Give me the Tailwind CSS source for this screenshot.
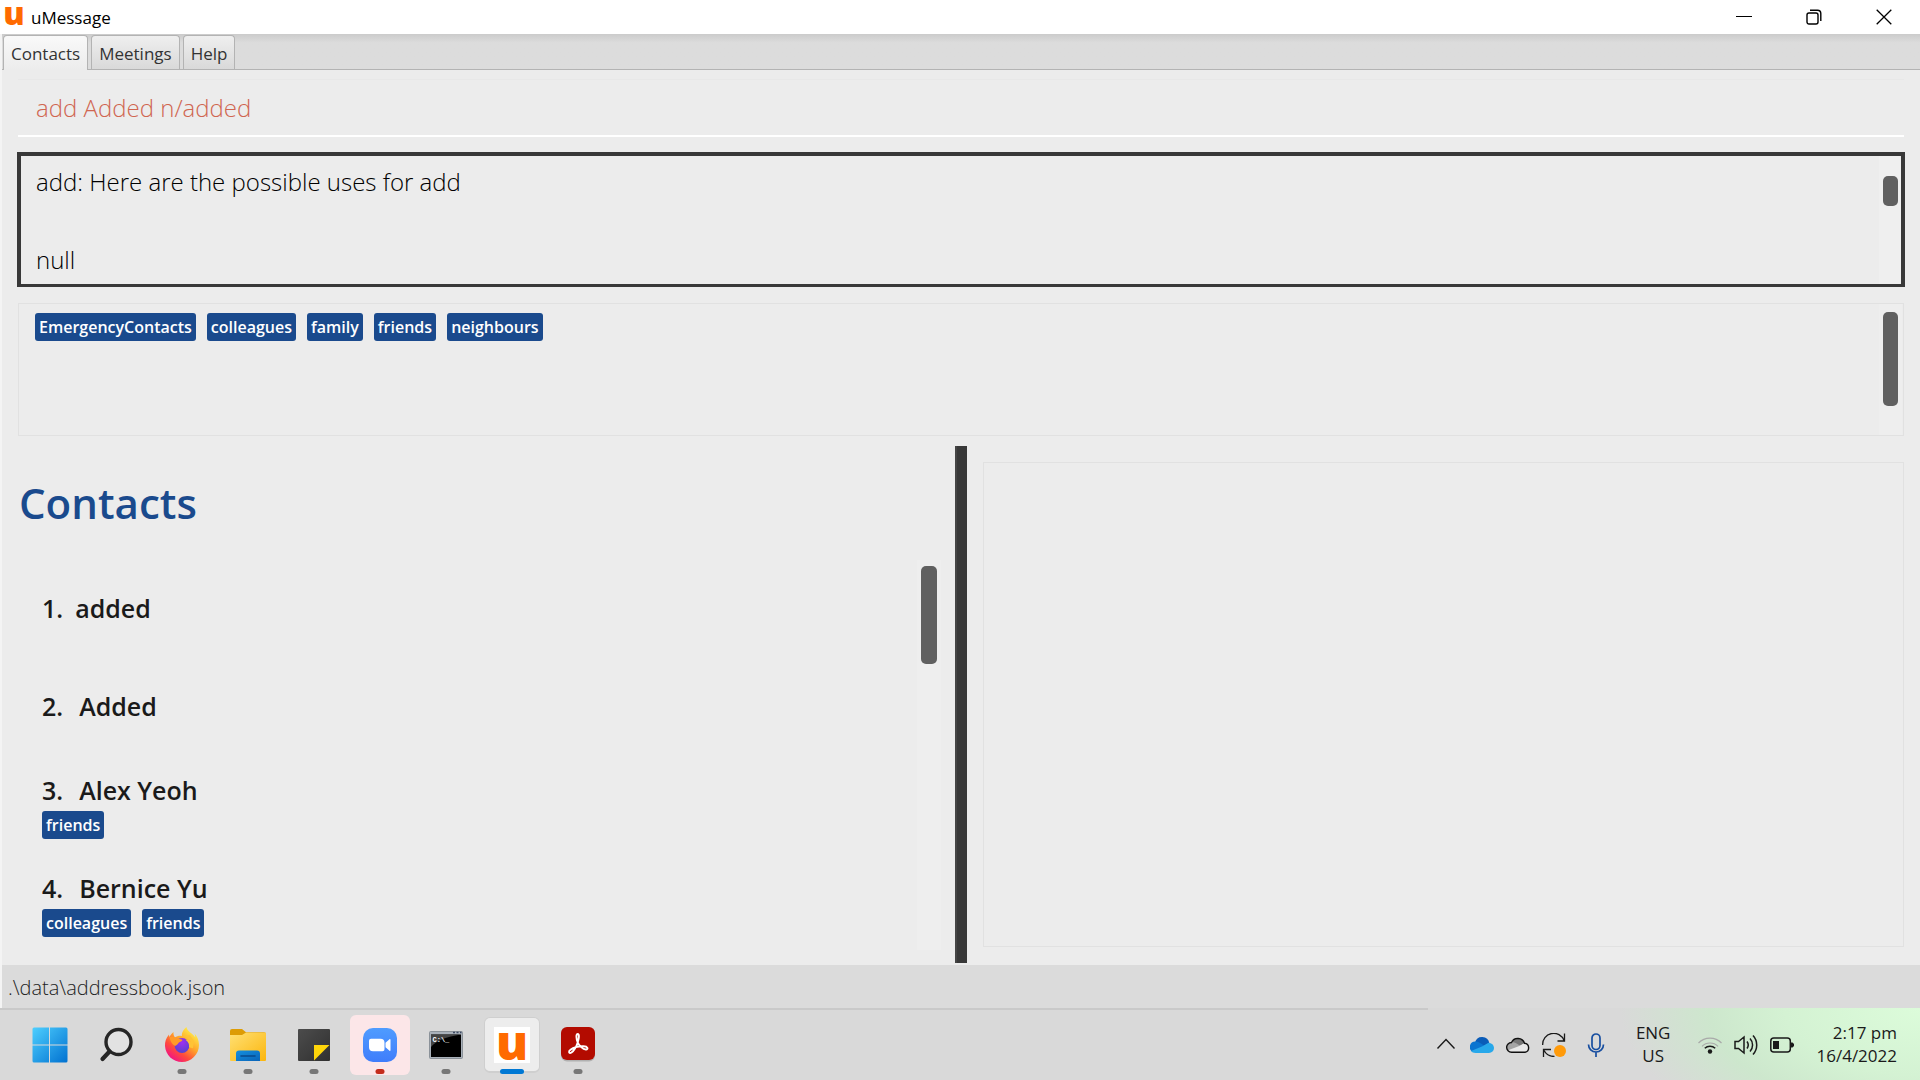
<!DOCTYPE html>
<html lang="en">
<head>
<meta charset="utf-8">
<meta name="viewport" content="width=device-width, initial-scale=1">
<title>uMessage</title>
<script src="https://cdn.jsdelivr.net/npm/@tailwindcss/browser@4"></script>
</head>
<body class="flex min-h-screen flex-col bg-[#ececec] font-['Open_Sans','Noto_Sans',sans-serif] text-[17px] text-black">

<!-- Title bar -->
<header class="flex h-[34px] items-center justify-between bg-white pr-7 pl-[5px]">
  <div class="flex items-center gap-2">
    <svg class="h-[18px] w-[18px] overflow-visible" viewBox="0 0 18 18" aria-hidden="true"><text x="9" y="17" text-anchor="middle" font-size="32" font-weight="800" fill="#ff6a00">u</text></svg>
    <h1 class="pt-[2px] leading-8">uMessage</h1>
  </div>
  <div class="flex items-center gap-[54px]">
    <button aria-label="Minimize"><svg class="h-4 w-4" viewBox="0 0 16 16"><path d="M0 7.500h16" stroke="#000"/></svg></button>
    <button aria-label="Restore"><svg class="h-4 w-4" viewBox="0 0 16 16" fill="none" stroke="#000" stroke-width="1.400"><rect x="1" y="4" width="11" height="11" rx="2"/><path d="M4 1.200h7.500a3.300 3.300 0 0 1 3.300 3.300V12"/></svg></button>
    <button aria-label="Close"><svg class="h-4 w-4" viewBox="0 0 16 16"><path d="M.7.7l14.600 14.600M15.300.7L.7 15.300" stroke="#000" stroke-width="1.300"/></svg></button>
  </div>
</header>

<div class="flex flex-1 flex-col border-l-2 border-[#f4f4f4]">
  <!-- Tabs -->
  <nav class="flex h-9 items-end gap-[3px] border-b border-[#b3b3b3] bg-linear-to-b from-[#cbcbcb] to-[#dcdcdc] to-25% pl-px text-[#333]" role="tablist">
    <button role="tab" aria-selected="true" class="-mb-px h-[35px] rounded-t-[4px] border border-b-0 border-[#b3b3b3] bg-linear-to-b from-[#f9f9f9] to-[#ececec] px-[7px] pt-px leading-[34px]">Contacts</button>
    <button role="tab" aria-selected="false" class="h-[34px] rounded-t-[4px] border border-b-0 border-[#b3b3b3] bg-linear-to-b from-[#efefef] to-[#d9d9d9] px-[7px] pt-px leading-[34px]">Meetings</button>
    <button role="tab" aria-selected="false" class="h-[34px] rounded-t-[4px] border border-b-0 border-[#b3b3b3] bg-linear-to-b from-[#efefef] to-[#d9d9d9] px-[7px] pt-px leading-[34px]">Help</button>
  </nav>

  <!-- Command box, result display and tag list -->
  <div class="flex flex-col px-[15px] pt-[9px]">
    <input type="text" aria-label="Command" value="add Added n/added" class="mx-px h-[58px] border-t border-b-2 border-t-[#e8e8e8] border-b-white px-[18px] text-2xl font-light text-[#d06651] outline-none">

    <div class="mt-[15px] flex h-[135px] border-4 border-b-3 border-[#383838]">
      <textarea readonly aria-label="Result" class="flex-1 resize-none overflow-hidden px-[15px] pt-[6px] text-2xl leading-[39px] font-light outline-none">add: Here are the possible uses for add

null</textarea>
      <div class="w-[22px] rounded-r-[3px] bg-[#efefef] pt-5 pr-[3px] pl-1"><div class="h-[30px] rounded-[5px] bg-[#606060]"></div></div>
    </div>

    <section aria-label="Tags" class="mx-px mt-4 flex h-[133px] border border-[#e1e1e1]">
      <ul class="flex flex-1 items-start gap-[11px] px-4 pt-[9px] text-base leading-7 font-semibold text-white">
        <li class="rounded-[3px] bg-[#1a4a8d] px-1">EmergencyContacts</li>
        <li class="rounded-[3px] bg-[#1a4a8d] px-1">colleagues</li>
        <li class="rounded-[3px] bg-[#1a4a8d] px-1">family</li>
        <li class="rounded-[3px] bg-[#1a4a8d] px-1">friends</li>
        <li class="rounded-[3px] bg-[#1a4a8d] px-1">neighbours</li>
      </ul>
      <div class="mr-px w-[23px] bg-[#eeeeee] px-1 pt-2"><div class="h-[94px] rounded-[5px] bg-[#606060]"></div></div>
    </section>
  </div>

  <!-- Contact list and details -->
  <main class="mt-[10px] mb-[2px] flex flex-1 pl-[2px]">
    <section class="flex flex-1 flex-col pt-[26px] pr-[14px] pb-[13px] pl-[15px]">
      <h2 class="pt-[2px] text-[42px] leading-[58px] font-semibold text-[#1a4a8d]">Contacts</h2>
      <div class="mt-7 flex flex-1">
        <ol class="flex-1 px-[23px] pt-[30px] text-[#1a1a1a]">
          <li class="h-[98px]"><h3 class="flex gap-3 text-[25px] leading-9 font-semibold"><span>1.</span><span>added</span></h3></li>
          <li class="h-[84px]"><h3 class="flex gap-4 text-[25px] leading-9 font-semibold"><span>2.</span><span>Added</span></h3></li>
          <li class="h-[98px]">
            <h3 class="flex gap-4 text-[25px] leading-9 font-semibold"><span>3.</span><span>Alex Yeoh</span></h3>
            <div class="mt-[3px] flex gap-[11px] text-base leading-7 font-semibold text-white"><span class="rounded-[3px] bg-[#1a4a8d] px-1">friends</span></div>
          </li>
          <li>
            <h3 class="flex gap-4 text-[25px] leading-9 font-semibold"><span>4.</span><span>Bernice Yu</span></h3>
            <div class="mt-[3px] flex gap-[11px] text-base leading-7 font-semibold text-white"><span class="rounded-[3px] bg-[#1a4a8d] px-1">colleagues</span><span class="rounded-[3px] bg-[#1a4a8d] px-1">friends</span></div>
          </li>
        </ol>
        <div class="w-6 bg-[#eeeeee] px-1 pt-[6px]"><div class="h-[98px] rounded-[5px] bg-[#606060]"></div></div>
      </div>
    </section>
    <div role="separator" class="w-3 border-l-2 border-[#454545] bg-[#383838]"></div>
    <section aria-label="Details" class="flex flex-1 pt-4 pr-4 pb-4 pl-4"><div class="flex-1 border border-[#e1e1e1]"></div></section>
  </main>

  <div class="bg-[#dbdbdb] pt-[2px] pl-[6px] text-xl leading-[41px] font-light text-[#222]">.\data\addressbook.json</div>
</div>

<!-- Taskbar -->
<footer class="relative flex h-[72px] items-center justify-between bg-[#d9d9d9] bg-[radial-gradient(ellipse_300px_150px_at_100%_0%,#dcfcda_0%,#d4f2d3_45%,#cde7cd_70%,#d9d9d9_100%)] pt-[7px] pr-[23px] pb-[5px] pl-5">
  <div class="absolute top-0 left-0 h-[2px] w-[1428px] max-w-3/4 bg-[#c9c9c9]"></div>
  <nav class="flex gap-[6px]" aria-label="Taskbar">
    <button aria-label="Start" class="relative flex size-15 items-center justify-center">
      <svg class="size-9" viewBox="0 0 36 36"><defs><linearGradient id="win" gradientUnits="userSpaceOnUse" x1="0" y1="0" x2="36" y2="36"><stop offset="0" stop-color="#4fd0ff"/><stop offset="1" stop-color="#0070d0"/></linearGradient></defs><path d="M2 .5h15v17H.5V2A1.500 1.500 0 0 1 2 .5zM18 .5h16A1.500 1.500 0 0 1 35.500 2v15.500H18zM.5 18.500H17v17H2A1.500 1.500 0 0 1 .5 34zM18 18.500h17.500V34a1.500 1.500 0 0 1-1.500 1.500H18z" fill="url(#win)"/></svg>
    </button>
    <button aria-label="Search" class="relative flex size-15 items-center justify-center">
      <svg class="size-9" viewBox="0 0 36 36" fill="none" stroke="#262626"><circle cx="20.500" cy="15" r="12.500" fill="#e2e2e2" stroke-width="3.400"/><path d="M11.500 24.500L4.500 32" stroke-width="4.200" stroke-linecap="round"/></svg>
    </button>
    <button aria-label="Firefox" class="relative flex size-15 items-center justify-center">
      <svg class="size-9" viewBox="0 0 36 36"><defs><linearGradient id="fx" x1=".85" y1=".1" x2=".2" y2=".95"><stop offset="0" stop-color="#fff14a"/><stop offset=".4" stop-color="#ffa52a"/><stop offset=".7" stop-color="#ff4a3c"/><stop offset="1" stop-color="#f0108a"/></linearGradient><radialGradient id="fg" cx=".5" cy=".3" r=".8"><stop offset="0" stop-color="#a030f0"/><stop offset="1" stop-color="#4b45c8"/></radialGradient></defs><path d="M22.500 0C18.500 3 17.500 7 18 9c-3-.5-5 .3-7 1.500C9.800 9 9.300 7 9.500 5 7.500 6.500 6.300 8.500 5.500 10c-.3-.8-.5-1.800-.5-2.500C2 11 .8 15 1 19c.5 9 8 16 17 16s17-7.500 17-17c0-5-2-9-4.500-11.500.5 1.500.8 3 .7 4C29 6 23 5 22.500 0z" fill="url(#fx)"/><circle cx="18" cy="18.500" r="7.500" fill="url(#fg)"/><path d="M5.500 10c3.500-.5 7 0 8.500 2 2 0 4 .2 4.500 1-.5 1.800-3.500 2-4 3-.5 1.200-1.500 2-3.500 3C7.500 17 6 13.500 5.500 10z" fill="#ff9a28"/><path d="M18 9c5 0 8 3 9 6.500-2-2.500-4-3-5.500-2.800 3 2 4 5 3.500 7.500l4 1 1-7-4-6z" fill="#ffc334"/></svg>
      <span class="absolute bottom-px left-1/2 h-[5px] w-[9px] -translate-x-1/2 rounded-full bg-[#777]"></span>
    </button>
    <button aria-label="File Explorer" class="relative flex size-15 items-center justify-center">
      <svg class="size-9" viewBox="0 0 36 36"><defs><linearGradient id="fo" x1="0" y1="0" x2="1" y2="1"><stop offset="0" stop-color="#ffe074"/><stop offset="1" stop-color="#fbb60d"/></linearGradient><linearGradient id="fb" x1="0" y1="0" x2="1" y2="1"><stop offset="0" stop-color="#1490df"/><stop offset="1" stop-color="#0a64b8"/></linearGradient></defs><path d="M0 4a2 2 0 0 1 2-2h10l4 3.200h18a2 2 0 0 1 2 2V20H0z" fill="#dd9c05"/><path d="M0 8h12l4-2.500h19A1 1 0 0 1 36 6.500V33a1 1 0 0 1-1 1H1a1 1 0 0 1-1-1z" fill="url(#fo)"/><path d="M6 34v-7.500a3 3 0 0 1 3-3h18a3 3 0 0 1 3 3V34z" fill="url(#fb)"/><path d="M11 29h14" stroke="#084a8c" stroke-width="1.600" stroke-linecap="round"/></svg>
      <span class="absolute bottom-px left-1/2 h-[5px] w-[9px] -translate-x-1/2 rounded-full bg-[#777]"></span>
    </button>
    <button aria-label="Sticky Notes" class="relative flex size-15 items-center justify-center">
      <svg class="size-9" viewBox="0 0 36 36"><defs><linearGradient id="sn" x1="0" y1="0" x2="1" y2="1"><stop offset="0" stop-color="#4c4c4c"/><stop offset="1" stop-color="#303030"/></linearGradient></defs><rect x="2" y="2" width="32" height="32" rx="1" fill="url(#sn)"/><path d="M18 18h15.500L18 33.500z" fill="#ffd60a"/></svg>
      <span class="absolute bottom-px left-1/2 h-[5px] w-[9px] -translate-x-1/2 rounded-full bg-[#777]"></span>
    </button>
    <button aria-label="Zoom" class="relative flex size-15 items-center justify-center rounded-md bg-[#fce6e8]">
      <svg class="size-9" viewBox="0 0 36 36"><defs><linearGradient id="zm" x1="0" y1="0" x2="0" y2="1"><stop offset="0" stop-color="#4f9cff"/><stop offset="1" stop-color="#3f7dfb"/></linearGradient></defs><rect x="1" y="1" width="34" height="34" rx="10" fill="url(#zm)"/><path d="M7 13.800a2 2 0 0 1 2-2h9.500a4 4 0 0 1 4 4v6.400a2 2 0 0 1-2 2H11a4 4 0 0 1-4-4zM23.500 15.800l4-3.500c.5-.4 1-.1 1 .5v10.400c0 .6-.5.900-1 .5l-4-3.500z" fill="#fff"/></svg>
      <span class="absolute bottom-px left-1/2 h-[5px] w-[9px] -translate-x-1/2 rounded-full bg-[#c42b1c]"></span>
    </button>
    <button aria-label="Command Prompt" class="relative flex size-15 items-center justify-center">
      <svg class="size-9" viewBox="0 0 36 36"><rect x="1.500" y="4.500" width="33" height="27" rx="1" fill="#a9b1ba" stroke="#8b9299"/><path d="M25 5.500h2M28.500 5.500h2M32 5.500h1.500" stroke="#3d4a63" stroke-width="1.500"/><rect x="3" y="7.500" width="30" height="22.500" fill="#000"/><path d="M3 7.500h30C18 10 9 13 3 20z" fill="#444"/><text x="4.500" y="14.500" font-size="7" font-weight="700" fill="#fff" font-family="Liberation Mono, monospace">C:\_</text></svg>
      <span class="absolute bottom-px left-1/2 h-[5px] w-[9px] -translate-x-1/2 rounded-full bg-[#777]"></span>
    </button>
    <button aria-label="uMessage" class="relative flex size-15 items-center justify-center">
      <span class="flex size-14 items-center justify-center rounded-md border border-b-2 border-[#cfcfcf] bg-[#ededed]">
        <svg class="size-9 overflow-visible bg-white" viewBox="0 0 36 36"><text x="18" y="32.500" text-anchor="middle" font-size="48" font-weight="800" fill="#ff6a00">u</text></svg>
      </span>
      <span class="absolute bottom-px left-1/2 h-[5px] w-6 -translate-x-1/2 rounded-full bg-[#0078d4]"></span>
    </button>
    <button aria-label="Adobe Acrobat" class="relative flex size-15 items-center justify-center">
      <svg class="size-9" viewBox="0 0 36 36"><rect x="1" y="1.500" width="34" height="33" rx="6" fill="#8a8a8a" opacity=".5"/><rect x="1" y="0" width="34" height="33" rx="6" fill="#b30b00"/><path d="M17.500 7c2.200 0 1.500 4.500.2 8.500-1.500 4.500-4 8.500-6.200 10-2.500 1.500-3.500-.8-1-2.700 3-2.200 8.500-3.700 13-3.500 4.500.2 5 3 2.500 3.200-3 .2-7-4-8.500-7.500-1-2.500-1.800-8 0-8z" fill="none" stroke="#fff" stroke-width="1.900" stroke-linejoin="round"/></svg>
      <span class="absolute bottom-px left-1/2 h-[5px] w-[9px] -translate-x-1/2 rounded-full bg-[#777]"></span>
    </button>
  </nav>

  <div class="flex items-center gap-7 text-[#1a1a1a]">
    <div class="flex items-center gap-3">
      <button aria-label="Show hidden icons"><svg class="size-6" viewBox="0 0 24 24"><path d="M3.500 15.500L12 6.500l8.500 9" fill="none" stroke="#1a1a1a" stroke-width="1.400"/></svg></button>
      <button aria-label="OneDrive"><svg class="size-6" viewBox="0 0 24 24"><path d="M5 9.500A7.300 7.300 0 0 1 19.300 10L13 14z" fill="#0a5cb8"/><path d="M5.500 8.500c3 0 5 1.500 9 4.500L3 19A5.500 5.500 0 0 1 5.500 8.500z" fill="#0a74d0"/><path d="M12 13.500l6.500-3.700c3 .2 5.500 2.200 5.500 5.200a5 5 0 0 1-5 5H5.500c-2 0-3.700-.8-4.500-2z" fill="#28a8ea"/></svg></button>
      <button aria-label="OneDrive personal"><svg class="size-6" viewBox="0 0 24 24"><path d="M6 9.500A7 7 0 0 1 18.500 10l-6 4z" fill="#777"/><path d="M5.500 9c3 0 5 1.500 9 4L4 19A5.300 5.300 0 0 1 5.500 9z" fill="#a5a5a5"/><path d="M12 13.500l6-3c3 0 5 2 5 4.700a4.300 4.300 0 0 1-4 4h-14c-1 0-2.500-.8-3-2z" fill="#e9e9e9"/><path d="M5.500 9.500a7 7 0 0 1 13 .8 4.500 4.500 0 0 1 .5 8.900H5.500a4.850 4.850 0 0 1 0-9.700z" fill="none" stroke="#111" stroke-width="1.400"/></svg></button>
      <button aria-label="Sync"><svg class="size-6" viewBox="0 0 24 24"><path d="M.7 12A11 11 0 0 1 22 7.500M22.500.5V8h-7M1.500 24v-7.500H9M2 17.500c2.500 4.500 6.500 6 10.500 6" fill="none" stroke="#1a1a1a" stroke-width="1.300"/><circle cx="18" cy="18" r="6" fill="#ff9a0a"/></svg></button>
      <button aria-label="Microphone" class="ml-[6px]"><svg class="size-6" viewBox="0 0 24 24" fill="none" stroke="#174ea0" stroke-width="1.700"><rect x="8" y="1" width="8" height="15.500" rx="4"/><path d="M4.500 11.500a7.500 7.500 0 0 0 15 0M12 19v5"/></svg></button>
    </div>
    <button class="pb-[2px] text-center leading-[23px]">ENG<br>US</button>
    <div class="flex items-center gap-3">
      <button aria-label="Wi-Fi"><svg class="size-6" viewBox="0 0 24 24" fill="none" stroke-width="1.500"><path d="M.5 10a16 16 0 0 1 23 0M4 13.300a11.300 11.300 0 0 1 16 0" stroke="#a9a9a9" stroke-width="1.200"/><path d="M6.800 15.300a7.500 7.500 0 0 1 10.400 0" stroke="#1a1a1a"/><circle cx="12" cy="18.500" r="2.200" fill="#1a1a1a"/></svg></button>
      <button aria-label="Volume"><svg class="size-6" viewBox="0 0 24 24" fill="none" stroke="#1a1a1a" stroke-width="1.500"><path d="M1 8.500h3.500L10 4v16l-5.500-4.500H1zM13 8.500a6 6 0 0 1 0 7M16 5.500a9.500 9.500 0 0 1 0 13M19 2.500a14 14 0 0 1 0 19"/></svg></button>
      <button aria-label="Battery"><svg class="size-6" viewBox="0 0 24 24"><rect x=".8" y="5" width="19.500" height="14" rx="3" fill="none" stroke="#1a1a1a" stroke-width="1.500"/><rect x="3" y="8" width="6" height="8" fill="#1a1a1a"/><path d="M21 9.500h1.500L24 11v2l-1.500 1.500H21z" fill="#1a1a1a"/></svg></button>
      <button class="ml-[10px] pb-[2px] text-right leading-[23px]">2:17 pm<br>16/4/2022</button>
    </div>
  </div>
</footer>
</body>
</html>
